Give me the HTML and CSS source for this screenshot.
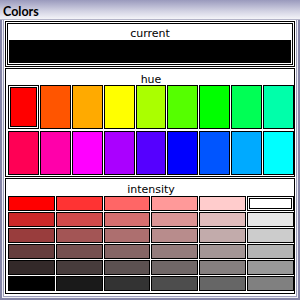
FILE: index.html
```html
<!DOCTYPE html>
<html>
<head>
<meta charset="utf-8">
<link rel="stylesheet" href="styles.css">
</head>
<body>
<div class="window">
  <div class="titlebar">Colors</div>
  <div class="frame"><div class="frame2"><div class="frame3"><div class="content">
    <section class="panel current-panel">
      <div class="current-box">
        <div class="label">current</div>
        <div class="current-swatch"></div>
      </div>
    </section>
    <section class="panel hue-panel">
      <div class="label">hue</div>
      <div class="hue-grid">
        <div class="sw selected" style="background:#ff0000"></div>
        <div class="sw" style="background:#ff5500"></div>
        <div class="sw" style="background:#ffaa00"></div>
        <div class="sw" style="background:#ffff00"></div>
        <div class="sw" style="background:#aaff00"></div>
        <div class="sw" style="background:#55ff00"></div>
        <div class="sw" style="background:#00ff00"></div>
        <div class="sw" style="background:#00ff55"></div>
        <div class="sw" style="background:#00ffaa"></div>
        <div class="sw" style="background:#ff0055"></div>
        <div class="sw" style="background:#ff00aa"></div>
        <div class="sw" style="background:#ff00ff"></div>
        <div class="sw" style="background:#aa00ff"></div>
        <div class="sw" style="background:#5500ff"></div>
        <div class="sw" style="background:#0000ff"></div>
        <div class="sw" style="background:#0055ff"></div>
        <div class="sw" style="background:#00aaff"></div>
        <div class="sw" style="background:#00ffff"></div>
      </div>
    </section>
    <section class="panel int-panel">
      <div class="label int-label">intensity</div>
      <div class="int-grid">
        <div class="sw" style="background:#ff0000"></div>
        <div class="sw" style="background:#ff3333"></div>
        <div class="sw" style="background:#ff6666"></div>
        <div class="sw" style="background:#ff9999"></div>
        <div class="sw" style="background:#ffcccc"></div>
        <div class="sw selected" style="background:#ffffff"></div>
        <div class="sw" style="background:#cc2929"></div>
        <div class="sw" style="background:#d14b4b"></div>
        <div class="sw" style="background:#d66f6f"></div>
        <div class="sw" style="background:#db9595"></div>
        <div class="sw" style="background:#e0bcbc"></div>
        <div class="sw" style="background:#e6e6e6"></div>
        <div class="sw" style="background:#993d3d"></div>
        <div class="sw" style="background:#a35555"></div>
        <div class="sw" style="background:#ad6f6f"></div>
        <div class="sw" style="background:#b88c8c"></div>
        <div class="sw" style="background:#c2abab"></div>
        <div class="sw" style="background:#cccccc"></div>
        <div class="sw" style="background:#663d3d"></div>
        <div class="sw" style="background:#755050"></div>
        <div class="sw" style="background:#856565"></div>
        <div class="sw" style="background:#947c7c"></div>
        <div class="sw" style="background:#a39696"></div>
        <div class="sw" style="background:#b3b3b3"></div>
        <div class="sw" style="background:#332929"></div>
        <div class="sw" style="background:#473c3c"></div>
        <div class="sw" style="background:#5c5151"></div>
        <div class="sw" style="background:#706767"></div>
        <div class="sw" style="background:#857f7f"></div>
        <div class="sw" style="background:#999999"></div>
        <div class="sw" style="background:#000000"></div>
        <div class="sw" style="background:#1a1a1a"></div>
        <div class="sw" style="background:#333333"></div>
        <div class="sw" style="background:#4d4d4d"></div>
        <div class="sw" style="background:#666666"></div>
        <div class="sw" style="background:#808080"></div>
      </div>
    </section>
  </div></div></div></div>
</div>
</body>
</html>
```
FILE: styles.css
```css
* { box-sizing: border-box; }
html, body { margin: 0; padding: 0; background: #ffffff; }
.window {
  width: 300px;
  height: 300px;
  display: flex;
  flex-direction: column;
}
.titlebar {
  height: 20px;
  padding: 3px 0 0 3px;
  line-height: 17px;
  font-family: Lato, "Liberation Sans", sans-serif;
  font-weight: bold;
  font-size: 12.5px;
  color: #000;
  background: linear-gradient(#9a9abd, #d4d4e4 60%, #f4f4f8);
  border-bottom: 1px solid #b4b4c8;
}
.frame {
  flex: 1;
  display: flex;
  border: 2px solid #8484a6;
  border-top: 0;
}
.frame2 {
  flex: 1;
  display: flex;
  border: 1px solid #ececf4;
  border-top: 0;
}
.frame3 {
  flex: 1;
  display: flex;
  border: 1px solid #a0a0bc;
  border-top: 0;
}
.content {
  flex: 1;
  background: #fff;
  padding: 1px 1px 1px 1px;
  display: flex;
  flex-direction: column;
  gap: 1px;
}
.panel {
  border: 1px solid #000;
  background: #fff;
}
.label {
  font-family: "DejaVu Sans", sans-serif;
  font-size: 11px;
  color: #000;
  text-align: center;
  height: 16px;
  line-height: 20px;
}
.current-panel {
  height: 46px;
  padding: 1px 1px 1px 1px;
}
.current-box {
  border: 1px solid #000;
  height: 42px;
  padding: 0 1px 1px 1px;
}
.current-swatch {
  height: 23px;
  background: #000;
}
.hue-panel {
  height: 109px;
  padding: 0 0 1px 2px;
}
.hue-panel .label { line-height: 22px; }
.hue-grid {
  display: grid;
  grid-template-columns: repeat(9, 1fr);
  grid-template-rows: 44px 44px;
  column-gap: 1px;
  row-gap: 2px;
}
.sw {
  border: 1px solid #000;
}
.sw.selected {
  box-shadow: inset 0 0 0 1px #fff, inset 0 0 0 2px #000;
}
.int-panel {
  height: 116px;
  padding: 0 0 2px 2px;
}
.int-label {
  height: 17px;
  line-height: 22px;
}
.int-grid {
  display: grid;
  grid-template-columns: repeat(6, 1fr);
  grid-template-rows: repeat(6, 15px);
  column-gap: 1px;
  row-gap: 1px;
}
```
